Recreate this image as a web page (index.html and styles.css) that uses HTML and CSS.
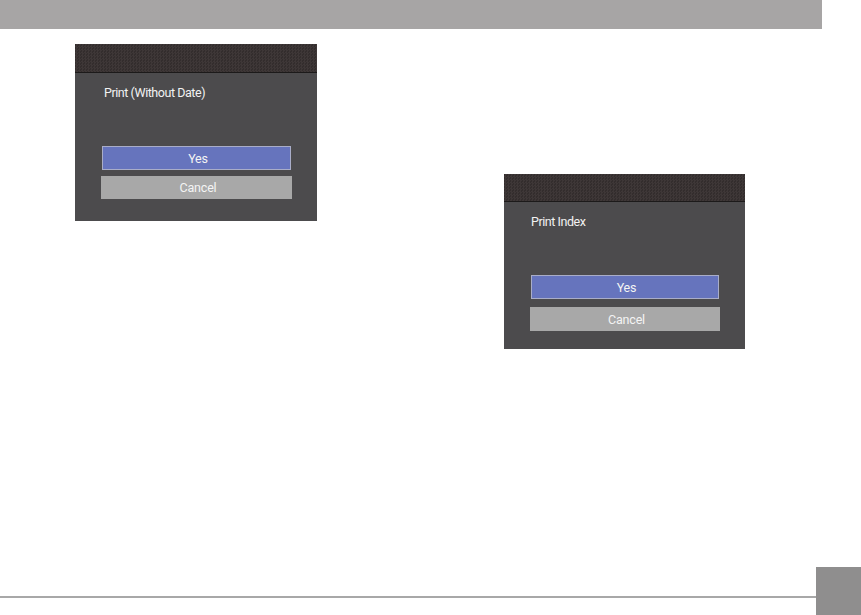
FILE: index.html
```html
<!DOCTYPE html>
<html>
<head>
<meta charset="utf-8">
<link rel="stylesheet" href="styles.css">
</head>
<body>
<div class="page">
  <div class="topbar"></div>
  <main class="content">
    <section class="dialog dialog-a">
      <div class="dialog-head"></div>
      <div class="dialog-body">
        <div class="dialog-title">Print (Without Date)</div>
        <div class="actions">
          <div class="btn btn-yes">Yes</div>
          <div class="btn btn-cancel">Cancel</div>
        </div>
      </div>
    </section>
    <section class="dialog dialog-b">
      <div class="dialog-head"></div>
      <div class="dialog-body">
        <div class="dialog-title">Print Index</div>
        <div class="actions">
          <div class="btn btn-yes">Yes</div>
          <div class="btn btn-cancel">Cancel</div>
        </div>
      </div>
    </section>
  </main>
  <footer class="footer">
    <div class="footer-rule"></div>
    <div class="page-tab"></div>
  </footer>
</div>
</body>
</html>
```
FILE: styles.css
```css
* { box-sizing: border-box; }
html, body { margin: 0; padding: 0; background: #ffffff; }
.page {
  width: 861px;
  height: 615px;
  display: flex;
  flex-direction: column;
  overflow: hidden;
}
.topbar {
  height: 29px;
  width: 822px;
  background: #a7a5a5;
  flex: none;
}
.content {
  flex: 1;
  display: flex;
  align-items: flex-start;
  padding-top: 15px;
  padding-left: 75px;
}
.dialog {
  width: 242px;
  height: 177px;
  display: flex;
  flex-direction: column;
  background: #4c4b4d;
  font-family: Roboto, "Noto Sans", sans-serif;
  color: #f0f0f0;
}
.dialog-b {
  width: 241px;
  height: 175px;
  margin-left: 187px;
  margin-top: 130px;
}
.dialog-head {
  height: 29px;
  flex: none;
  background-color: #393232;
  background-image: repeating-conic-gradient(#3e3737 0 25%, #332d2d 0 50%);
  background-size: 3px 3px;
  border-bottom: 1px solid #1c1a1a;
}
.dialog-b .dialog-head { height: 28px; }
.dialog-body {
  flex: 1;
  display: flex;
  flex-direction: column;
  padding: 12px 25px 22px 26px;
}
.dialog-b .dialog-body { padding: 12px 25px 18px 26px; }
.dialog-title {
  font-size: 12.5px;
  line-height: 16px;
  letter-spacing: -0.45px;
  padding-left: 3px;
  color: #f2f2f2;
}
.dialog-b .dialog-title { padding-left: 1px; }
.actions {
  margin-top: auto;
  display: flex;
  flex-direction: column;
  gap: 6px;
}
.dialog-b .actions { gap: 8px; }
.btn {
  display: flex;
  align-items: center;
  justify-content: center;
  font-size: 12.5px;
  letter-spacing: -0.2px;
  color: #f4f4f4;
  padding-left: 3px;
}
.btn-yes {
  height: 24px;
  margin: 0 1px;
  background: #6674bd;
  border: 1px solid #a9adc8;
}
.btn-cancel {
  height: 23px;
  background: #a8a8a8;
}
.dialog-b .btn-cancel { height: 24px; }
.footer {
  height: 48px;
  flex: none;
  display: flex;
  align-items: flex-end;
}
.footer-rule {
  flex: 1;
  height: 2px;
  margin-bottom: 17px;
  background: #a8a8a8;
}
.page-tab {
  width: 45px;
  height: 48px;
  background: #8f8e8e;
}
```
